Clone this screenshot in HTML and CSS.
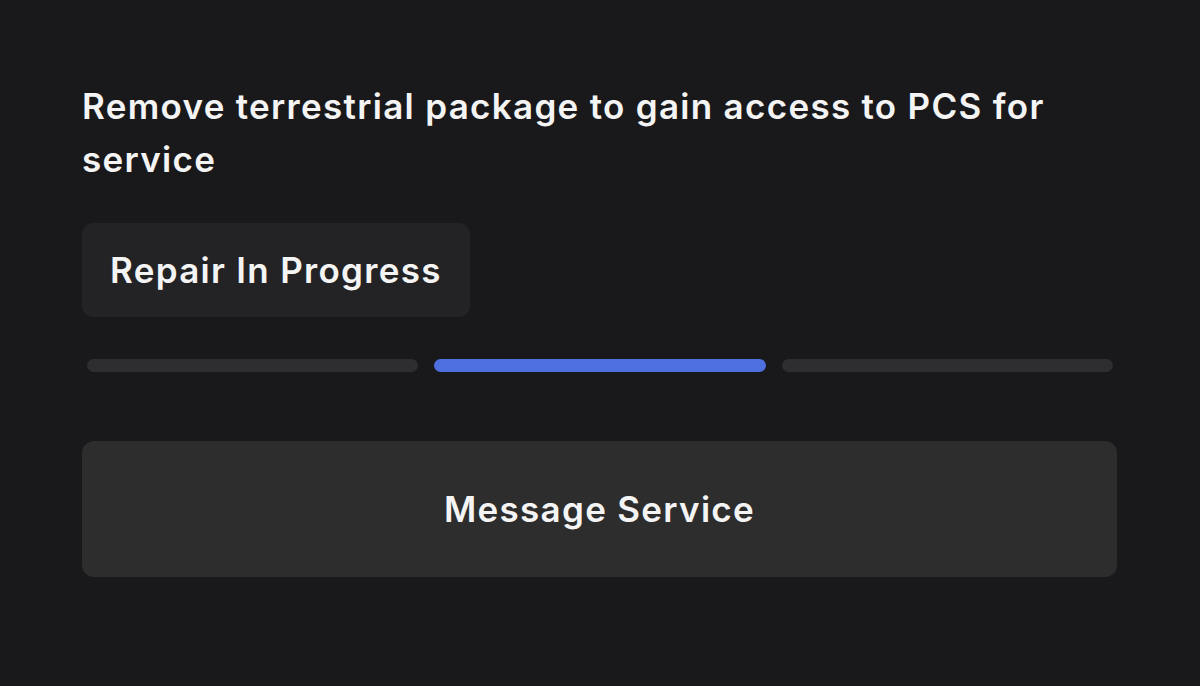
FILE: index.html
```html
<!DOCTYPE html>
<html lang="en">
<head>
<meta charset="utf-8">
<title>Repair</title>
<link rel="stylesheet" href="styles.css">
</head>
<body>
<main class="card">
  <p class="title">Remove terrestrial package to gain access to PCS for service</p>
  <div class="chip">Repair In Progress</div>
  <div class="steps">
    <span class="step"></span>
    <span class="step active"></span>
    <span class="step"></span>
  </div>
  <button class="action">Message Service</button>
</main>
</body>
</html>
```
FILE: styles.css
```css
* { box-sizing: border-box; }
html, body {
  margin: 0;
  width: 1200px;
  height: 686px;
  background: #19191b;
  overflow: hidden;
}
.card {
  height: 686px;
  padding: 80px 83px 0 82px;
  display: flex;
  flex-direction: column;
  align-items: flex-start;
  font-family: Inter, "Open Sans", sans-serif;
  color: #f4f4f4;
}
.title {
  margin: 0;
  font-size: 35px;
  font-weight: 600;
  line-height: 53px;
  letter-spacing: 1.3px;
  max-width: 1000px;
}
.chip {
  margin-top: 37px;
  height: 94px;
  padding: 0 28px 0 28px;
  display: flex;
  align-items: center;
  background: #232325;
  border-radius: 11px;
  font-size: 35px;
  font-weight: 600;
  letter-spacing: 1.3px;
}
.steps {
  margin-top: 42px;
  align-self: stretch;
  padding: 0 4px 0 5px;
  display: flex;
  gap: 16px;
}
.step {
  flex: 1;
  height: 13px;
  border-radius: 7px;
  background: #2e2e30;
}
.step.active { background: #4d6fe0; }
.action {
  margin-top: 69px;
  align-self: stretch;
  height: 136px;
  border: none;
  border-radius: 12px;
  background: #2d2d2e;
  color: #f4f4f4;
  font-family: Inter, "Open Sans", sans-serif;
  font-size: 35px;
  font-weight: 600;
  letter-spacing: 1.3px;
  padding: 0;
}
```
